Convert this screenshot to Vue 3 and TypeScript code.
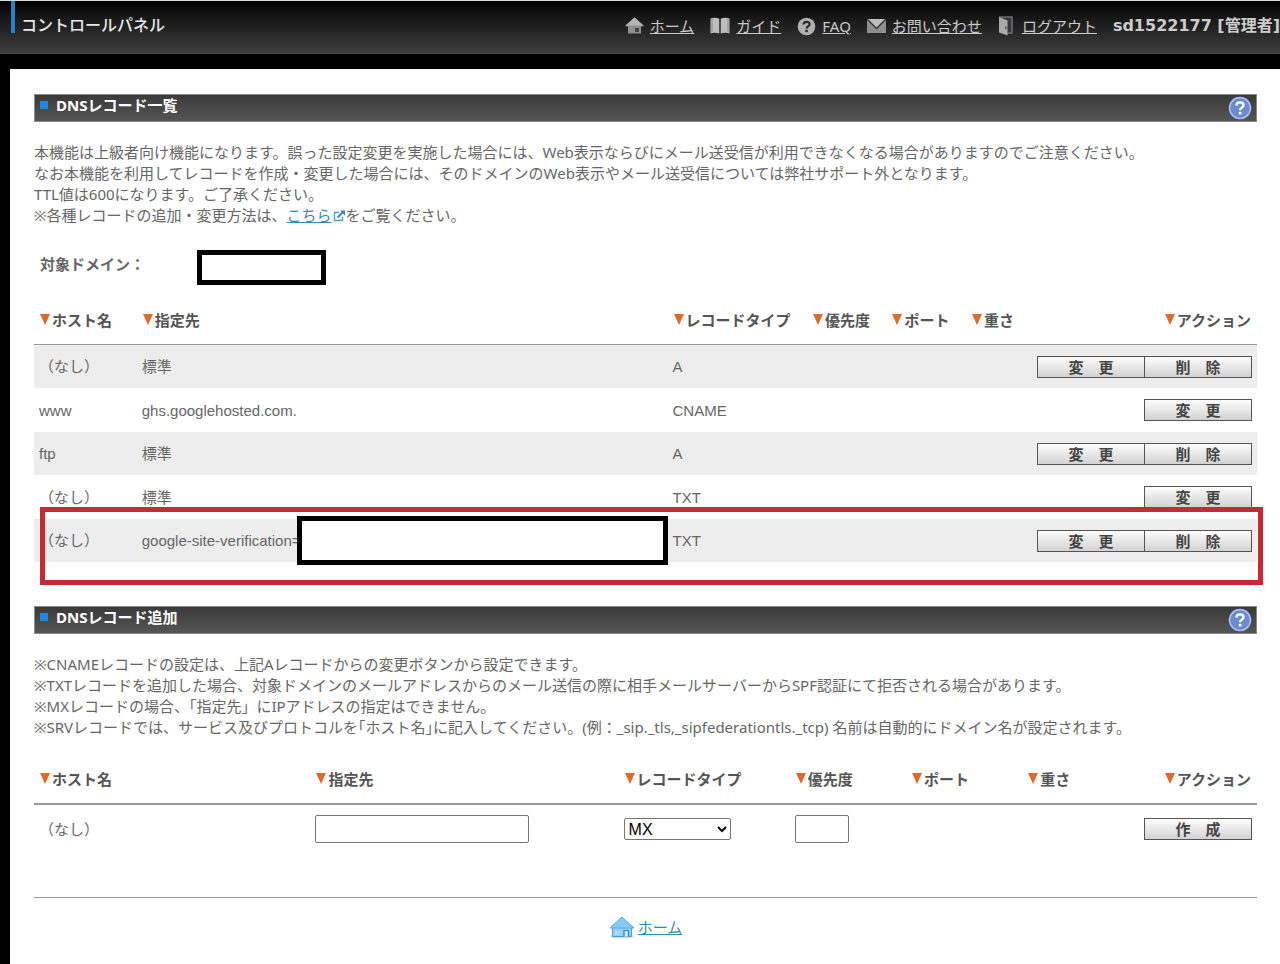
<script setup lang="ts">
import { ref } from 'vue'

interface DnsRecord {
  host: string
  target: string
  type: string
  removable: boolean
  masked?: boolean
}

const records: DnsRecord[] = [
  { host: '（なし）', target: '標準', type: 'A', removable: true },
  { host: 'www', target: 'ghs.googlehosted.com.', type: 'CNAME', removable: false },
  { host: 'ftp', target: '標準', type: 'A', removable: true },
  { host: '（なし）', target: '標準', type: 'TXT', removable: false },
  { host: '（なし）', target: 'google-site-verification=', type: 'TXT', removable: true, masked: true },
]

const columns: string[] = ['ホスト名', '指定先', 'レコードタイプ', '優先度', 'ポート', '重さ', 'アクション']

const newTarget = ref('')
const newType = ref('MX')
const newPriority = ref('')
</script>

<template>
  <div class="page">
    <header class="topbar">
      <div class="brand">コントロールパネル</div>
      <nav class="nav">
        <a href="#" class="nav-item">
          <svg width="19" height="18" viewBox="0 0 19 18" aria-hidden="true">
            <path d="M9.500 0.500L18.500 8.500V9.500H16V16.500H3V9.500H0.500V8.500Z" fill="#8f8f8f" />
            <path d="M9.500 0.500L18.500 8.500H0.500Z" fill="#b4b4b4" />
            <rect x="10" y="11" width="4" height="4" fill="#444" />
          </svg>
          <span>ホーム</span>
        </a>
        <a href="#" class="nav-item">
          <svg width="20" height="18" viewBox="0 0 20 18" aria-hidden="true">
            <path d="M0.500 1.500Q5 0 9.300 1.800V16.500Q5 15 0.500 16.500Z" fill="#bdbdbd" />
            <path d="M10.700 1.800Q15 0 19.500 1.500V16.500Q15 15 10.700 16.500Z" fill="#bdbdbd" />
            <path d="M2 2V15.500M18 2V15.500" stroke="#888" stroke-width="1" />
          </svg>
          <span>ガイド</span>
        </a>
        <a href="#" class="nav-item">
          <svg width="19" height="19" viewBox="0 0 19 19" aria-hidden="true">
            <circle cx="9.500" cy="9.500" r="8.800" fill="#b0b0b0" />
            <path d="M6.500 7.600Q6.500 4.800 9.600 4.800Q12.600 4.800 12.600 7.200Q12.600 8.600 10.900 9.500Q9.600 10.200 9.600 11.600" fill="none" stroke="#2b2b2b" stroke-width="2.200" />
            <rect x="8.400" y="12.800" width="2.400" height="2.300" fill="#2b2b2b" />
          </svg>
          <span>FAQ</span>
        </a>
        <a href="#" class="nav-item">
          <svg width="19" height="16" viewBox="0 0 19 16" aria-hidden="true">
            <rect x="0" y="1" width="19" height="14" fill="#8e8e8e" />
            <path d="M0 1H19L9.500 10.500Z" fill="#bcbcbc" />
            <path d="M0 1L9.500 10.500L19 1" fill="none" stroke="#333" stroke-width="1.400" />
          </svg>
          <span>お問い合わせ</span>
        </a>
        <a href="#" class="nav-item nav-logout">
          <svg width="15" height="20" viewBox="0 0 15 20" aria-hidden="true">
            <path d="M1 1H14V17H9" fill="#383838" stroke="#6c6c6c" stroke-width="1.600" />
            <path d="M1 1L9.500 4.500V19.500L1 16.500Z" fill="#aaa" />
            <rect x="7" y="10.500" width="1.500" height="2.500" fill="#555" />
          </svg>
          <span>ログアウト</span>
        </a>
        <strong class="user">sd1522177 [管理者]</strong>
      </nav>
    </header>

    <main class="panel">
      <section>
        <div class="bar">
          <h2>DNSレコード一覧</h2>
          <button type="button" class="help" aria-label="ヘルプ">
            <svg width="24" height="24" viewBox="0 0 24 24" aria-hidden="true">
              <circle cx="12" cy="12" r="10.500" fill="#6a8bd0" stroke="#a9bfee" stroke-width="1.600" />
              <path d="M8.500 9.600Q8.500 6.400 12 6.400Q15.500 6.400 15.500 9.200Q15.500 10.800 13.600 11.800Q12.100 12.600 12.100 14.200" fill="none" stroke="#fff" stroke-width="2.400" />
              <rect x="10.800" y="15.800" width="2.700" height="2.600" fill="#fff" />
            </svg>
          </button>
        </div>
        <p class="note">
          本機能は上級者向け機能になります。誤った設定変更を実施した場合には、Web表示ならびにメール送受信が利用できなくなる場合がありますのでご注意ください。<br />
          なお本機能を利用してレコードを作成・変更した場合には、そのドメインのWeb表示やメール送受信については弊社サポート外となります。<br />
          TTL値は600になります。ご了承ください。<br />
          ※各種レコードの追加・変更方法は、<a href="#" class="link">こちら</a><svg class="ext" width="14" height="12" viewBox="0 0 14 12" aria-hidden="true">
            <path d="M7 2.500H2.500V10.500H10.500V7" fill="none" stroke="#4aa0d0" stroke-width="1.400" />
            <path d="M5.500 7.500L11 2" stroke="#2b86c5" stroke-width="1.800" />
            <path d="M8 0.500H13V5.500Z" fill="#2b86c5" />
          </svg>をご覧ください。
        </p>

        <div class="domain">
          <span class="domain-label">対象ドメイン：</span>
          <span class="mask domain-mask"></span>
        </div>

        <div class="records">
          <table class="grid list">
            <colgroup>
              <col class="l-host" /><col class="l-target" /><col class="l-type" /><col class="l-num" /><col class="l-num" /><col class="l-weight" /><col />
            </colgroup>
            <thead>
              <tr>
                <th v-for="c in columns" :key="c" scope="col">
                  <svg class="tri" width="10" height="12" viewBox="0 0 10 12" aria-hidden="true"><path d="M0 0H10L5 11Z" fill="#df6a2c" /></svg>{{ c }}
                </th>
              </tr>
            </thead>
            <tbody>
              <tr v-for="(r, i) in records" :key="i">
                <td>{{ r.host }}</td>
                <td :class="{ target: r.masked }">{{ r.target }}<span v-if="r.masked" class="mask target-mask"></span></td>
                <td>{{ r.type }}</td>
                <td></td>
                <td></td>
                <td></td>
                <td class="actions">
                  <div class="buttons">
                    <button type="button" class="btn">変　更</button>
                    <button v-if="r.removable" type="button" class="btn">削　除</button>
                  </div>
                </td>
              </tr>
            </tbody>
          </table>
          <div class="highlight"></div>
        </div>
      </section>

      <section class="add">
        <div class="bar">
          <h2>DNSレコード追加</h2>
          <button type="button" class="help" aria-label="ヘルプ">
            <svg width="24" height="24" viewBox="0 0 24 24" aria-hidden="true">
              <circle cx="12" cy="12" r="10.500" fill="#6a8bd0" stroke="#a9bfee" stroke-width="1.600" />
              <path d="M8.500 9.600Q8.500 6.400 12 6.400Q15.500 6.400 15.500 9.200Q15.500 10.800 13.600 11.800Q12.100 12.600 12.100 14.200" fill="none" stroke="#fff" stroke-width="2.400" />
              <rect x="10.800" y="15.800" width="2.700" height="2.600" fill="#fff" />
            </svg>
          </button>
        </div>
        <p class="note">
          ※CNAMEレコードの設定は、上記Aレコードからの変更ボタンから設定できます。<br />
          ※TXTレコードを追加した場合、対象ドメインのメールアドレスからのメール送信の際に相手メールサーバーからSPF認証にて拒否される場合があります。<br />
          ※MXレコードの場合、「指定先」にIPアドレスの指定はできません。<br />
          ※SRVレコードでは、サービス及びプロトコルを｢ホスト名｣に記入してください。(例：_sip._tls,_sipfederationtls._tcp) 名前は自動的にドメイン名が設定されます。
        </p>

        <table class="grid form">
          <colgroup>
            <col class="f-host" /><col class="f-target" /><col class="f-type" /><col class="f-num" /><col class="f-num" /><col class="f-num" /><col />
          </colgroup>
          <thead>
            <tr>
              <th v-for="c in columns" :key="c" scope="col">
                <svg class="tri" width="10" height="12" viewBox="0 0 10 12" aria-hidden="true"><path d="M0 0H10L5 11Z" fill="#df6a2c" /></svg>{{ c }}
              </th>
            </tr>
          </thead>
          <tbody>
            <tr>
              <td>（なし）</td>
              <td><input v-model="newTarget" class="field wide" type="text" aria-label="指定先" /></td>
              <td>
                <select v-model="newType" class="select" aria-label="レコードタイプ">
                  <option>MX</option>
                  <option>A</option>
                  <option>TXT</option>
                  <option>SRV</option>
                </select>
              </td>
              <td><input v-model="newPriority" class="field short" type="text" aria-label="優先度" /></td>
              <td></td>
              <td></td>
              <td class="actions">
                <div class="buttons"><button type="button" class="btn">作　成</button></div>
              </td>
            </tr>
          </tbody>
        </table>
      </section>

      <footer class="foot">
        <svg width="26" height="23" viewBox="0 0 26 23" aria-hidden="true">
          <ellipse cx="13" cy="20.500" rx="12" ry="2" fill="#d5d9dd" />
          <path d="M3.500 10H22.500V20.500H3.500Z" fill="#8fd0fa" stroke="#4c9fd8" stroke-width="1" />
          <path d="M13 1L25 12H1Z" fill="#86c9f8" stroke="#5aa9dd" stroke-width="1" />
          <path d="M15 20.500V14.500H19.500V20.500" fill="#c9eaff" stroke="#2f86c4" stroke-width="1.200" />
          <path d="M6 15H11V19H6Z" fill="#a9defd" />
        </svg>
        <a href="#" class="link">ホーム</a>
      </footer>
    </main>
  </div>
</template>

<style>
body {
  margin: 0;
  background: #000;
}
</style>

<style scoped>
.page {
  display: flex;
  flex-direction: column;
  min-height: 100vh;
  overflow: hidden;
  background: #000;
  color: #666;
  font: 15px/21px "Noto Sans", "Noto Sans CJK JP", sans-serif;
}
.topbar {
  display: flex;
  justify-content: space-between;
  align-items: flex-start;
  box-sizing: border-box;
  height: 54px;
  padding-left: 11px;
  border-top: 1px solid #d3dbd9;
  border-bottom: 1px solid #4a4a4a;
  background: linear-gradient(#000, #151515 30%, #3e3e3e);
}
.brand {
  padding: 16px 0 0 6px;
  border-left: 4px solid #2a80cf;
  color: #e8e8e8;
  font-size: 16px;
  font-weight: 500;
  line-height: 16px;
}
.nav {
  display: flex;
  align-items: center;
  gap: 16px;
  padding-top: 13px;
  line-height: 24px;
  white-space: nowrap;
}
.nav-item {
  display: flex;
  align-items: center;
  gap: 6px;
  color: #c9c9c9;
  text-decoration: none;
}
.nav-item span {
  text-decoration: underline;
}
.nav-logout {
  gap: 9px;
}
.user {
  color: #ccc;
  font: bold 16px/24px "DejaVu Sans", "Noto Sans CJK JP", sans-serif;
}
.panel {
  flex: 1;
  margin: 15px 0 0 10px;
  padding: 25px 23px 20px 24px;
  background: #fff;
}
.bar {
  display: flex;
  justify-content: space-between;
  box-sizing: border-box;
  height: 28px;
  padding: 0 4px 0 5px;
  border: 1px solid #8a8a8a;
  background: linear-gradient(#3a3a3a, #555);
}
.bar h2 {
  display: flex;
  align-items: center;
  gap: 8px;
  height: 20px;
  margin: 0;
  color: #fff;
  font-size: 15px;
  font-weight: bold;
}
.bar h2::before {
  content: "";
  width: 8px;
  height: 8px;
  background: #2088dc;
}
.help {
  width: 24px;
  height: 24px;
  margin-top: 1px;
  padding: 0;
  border: 0;
  background: none;
}
.help svg {
  display: block;
}
.note {
  margin: 20px 0 0;
}
.link {
  color: #2a8fb4;
}
.ext {
  vertical-align: -1px;
}
.domain {
  display: flex;
  align-items: center;
  margin-top: 24px;
  padding-left: 6px;
}
.domain-label {
  width: 157px;
  padding-bottom: 6px;
  font-weight: bold;
}
.mask {
  box-sizing: border-box;
  border: 5px solid #000;
  background: #fff;
}
.domain-mask {
  width: 129px;
  height: 35px;
}
.records {
  position: relative;
  margin-top: 12px;
}
.grid {
  width: 100%;
  table-layout: fixed;
  border-collapse: collapse;
}
.grid th {
  height: 47px;
  padding: 0 0 0 6px;
  border-bottom: 1px solid #999;
  color: #555;
  text-align: left;
  white-space: nowrap;
}
.grid th:last-child {
  padding: 0 6px 0 0;
  text-align: right;
}
.tri {
  margin-right: 2px;
}
.grid td {
  height: 43px;
  padding: 0 5px;
  font-family: "Liberation Sans", "Noto Sans CJK JP", sans-serif;
  white-space: nowrap;
}
.list tbody tr:nth-child(odd) {
  background: #ededed;
}
.list tbody tr:nth-child(even) td {
  height: 44px;
}
.form {
  margin-top: 18px;
}
.form th {
  border-bottom: 2px solid #999;
}
.form tbody td {
  height: 48px;
}
.l-host { width: 8.4%; }
.l-target { width: 43.4%; }
.l-type { width: 11.4%; }
.l-num { width: 6.5%; }
.l-weight { width: 5%; }
.f-host { width: 22.6%; }
.f-target { width: 25.2%; }
.f-type { width: 14%; }
.f-num { width: 9.5%; }
.target {
  position: relative;
}
.target-mask {
  position: absolute;
  z-index: 2;
  inset: -3px 0 -3px 160px;
}
.highlight {
  position: absolute;
  right: -6px;
  bottom: -23px;
  left: 6px;
  box-sizing: border-box;
  height: 78px;
  border: 5px solid #c42b33;
  pointer-events: none;
}
.buttons {
  display: flex;
  justify-content: flex-end;
}
.btn {
  flex: none;
  box-sizing: border-box;
  width: 108px;
  height: 22px;
  padding: 0;
  border: 1px solid #555;
  background: linear-gradient(#fdfdfd, #d2d2d2);
  color: #444;
  font: bold 15px/20px "Noto Sans CJK JP", sans-serif;
}
.btn + .btn {
  margin-left: -1px;
}
.field {
  box-sizing: border-box;
  height: 28px;
  border: 1px solid #767676;
  border-radius: 2px;
  background: #fff;
  font: 16px "Liberation Sans", sans-serif;
}
.wide { width: 214px; }
.short { width: 54px; }
.select {
  width: 107px;
  height: 22px;
  border: 1px solid #767676;
  border-radius: 2px;
  background: #fff;
  color: #000;
  font: 16px "Liberation Sans", sans-serif;
}
.add {
  margin-top: 44px;
  padding-bottom: 44px;
  border-bottom: 1px solid #999;
}
.foot {
  display: flex;
  justify-content: center;
  align-items: center;
  gap: 3px;
  padding-top: 18px;
}
</style>
